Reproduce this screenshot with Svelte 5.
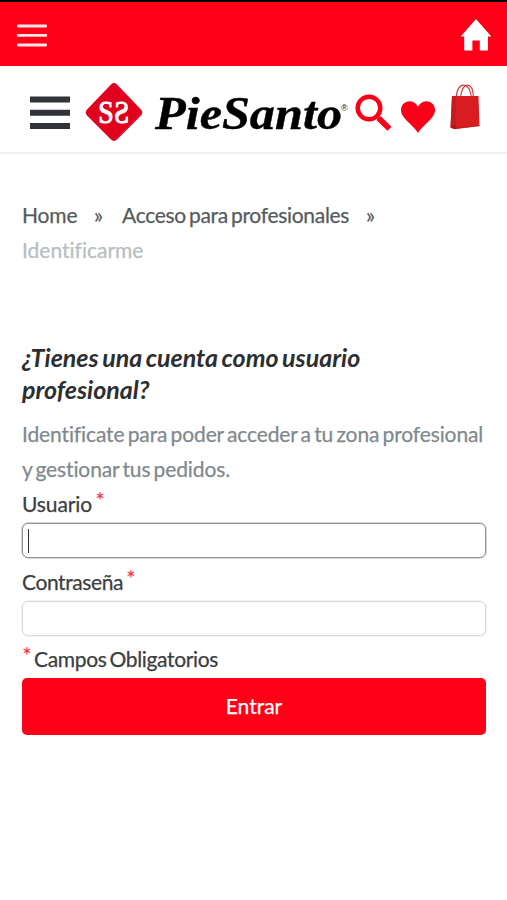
<script lang="ts">
  let usuario = $state('');
  let password = $state('');
</script>

<div class="page">
  <div class="topbar">
    <button class="icon-btn" aria-label="Menú">
      <svg width="30" height="24" viewBox="0 0 30 24">
        <path d="M1.2 3h27.600M1.200 12.400h27.600M1.200 22h27.600" stroke="#fff" stroke-opacity=".9" stroke-width="2.8" stroke-linecap="round" />
      </svg>
    </button>
    <button class="icon-btn" aria-label="Inicio">
      <svg width="32" height="33" viewBox="0 0 32 33">
        <path d="M16 0 31.300 17.500H28v13.900h-8.200V21.400h-7.400v10H4.200V17.500H.7z" fill="#fff" />
      </svg>
    </button>
  </div>

  <header class="header">
    <svg class="burger" width="40" height="33" viewBox="0 0 40 33">
      <path d="M0 3.600h40M0 16.800h40M0 30h40" stroke="#303438" stroke-width="6" />
    </svg>

    <svg class="logo" width="264" height="60" viewBox="0 0 264 60">
      <path d="M26 2.400q3-2.600 6 0L56 27.500q2.600 3 0 6L32 57.600q-3 2.600-6 0L2 33.500q-2.600-3 0-6z" fill="#e2001f" />
      <g class="monogram">
        <text x="13.2" y="40.5" textLength="15.4" lengthAdjust="spacingAndGlyphs">S</text>
        <text x="13.2" y="40.5" textLength="15.4" lengthAdjust="spacingAndGlyphs" transform="translate(57.5 0) scale(-1 1)">S</text>
      </g>
      <text class="brand" x="70" y="46.5" textLength="187" lengthAdjust="spacingAndGlyphs">PieSanto</text>
      <text class="reg" x="256" y="28.5">®</text>
    </svg>

    <svg class="search" width="37" height="38" viewBox="0 0 37 38">
      <circle cx="14" cy="15" r="11.300" fill="none" stroke="#fd0019" stroke-width="4.500" />
      <path d="m22.500 25 3-2L36.500 33.800 32.500 37.800 21.600 27.300z" fill="#fd0019" />
    </svg>
    <svg class="heart" width="36" height="34" viewBox="0 0 36 34">
      <path d="M18 33C15.500 28.500 9 23.500 5 18.800 1.800 15.200 1 12.800 1 9.800 1 4.800 4.800 1.200 9.400 1.200c3.600 0 7 2 8.600 5.600 1.600-3.600 5-5.600 8.600-5.600 4.600 0 8.400 3.600 8.400 8.600 0 3-.8 5.400-4 9C27 23.500 20.500 28.500 18 33z" fill="#fd0019" />
    </svg>
    <svg class="bag" width="30" height="46" viewBox="0 0 30 46">
      <path d="M6 14C7 5 10 1.200 13.500 1.200S20 5 21.500 13M10.500 14C11.500 5 14 1.200 17.500 1.200S23 5 23.500 13" fill="none" stroke="#d33a3a" stroke-width="1.200" />
      <path d="M2 12 28.500 12 29.500 42 5.500 45 .5 43.500z" fill="#d91c22" />
      <path d="M2 12 5.800 13 5.500 45 .5 43.500z" fill="#c51a20" />
      <path d="m1 43.500 4.500-4V45zM5.500 44.500l24-2.800" fill="#a5181d" stroke="#b5191f" stroke-width=".7" />
    </svg>
  </header>

  <main class="content">
    <nav class="breadcrumb">
      <span class="home">Home</span>
      <span class="sep">»</span>
      <span class="access">Acceso para profesionales</span>
      <span class="sep last">»</span>
      <span class="current">Identificarme</span>
    </nav>

    <h1>¿Tienes una cuenta como usuario<br />profesional?</h1>
    <p class="intro">Identificate para poder acceder a tu zona profesional<br />y gestionar tus pedidos.</p>

    <form onsubmit={(e) => e.preventDefault()}>
      <label for="usuario">Usuario <sup>*</sup></label>
      <div class="field active">
        {#if !usuario}<span class="caret"></span>{/if}
        <input id="usuario" type="text" bind:value={usuario} />
      </div>
      <label class="pass" for="password">Contraseña <sup>*</sup></label>
      <div class="field">
        <input id="password" type="password" bind:value={password} />
      </div>
      <div class="required"><sup>*</sup> Campos Obligatorios</div>
      <button class="submit" type="submit">Entrar</button>
    </form>
  </main>
</div>

<style>
  :global(body) {
    background: #fff;
  }

  .page {
    min-height: 900px;
    box-sizing: border-box;
    border-top: 2px solid #000;
    background: #fff;
    font-family: Lato, 'Open Sans', sans-serif;
    font-size: 21px;
    line-height: 35px;
    letter-spacing: -.12px;
    word-spacing: -2px;
    font-variant-ligatures: none;
    -webkit-text-stroke: .25px currentColor;
    color: #3b3e40;
  }

  .topbar {
    display: flex;
    justify-content: space-between;
    align-items: center;
    height: 64px;
    padding: 2px 15px 0 17px;
    box-sizing: border-box;
    background: #ff0016;
  }

  .icon-btn {
    display: flex;
    padding: 0;
    border: none;
    background: none;
  }

  .header {
    display: flex;
    align-items: flex-start;
    height: 88px;
    padding: 0 26px 0 30px;
    box-sizing: border-box;
    border-bottom: 2px solid #f1f1f1;
  }

  .header svg {
    flex: none;
    letter-spacing: 0;
  }

  .burger { margin-top: 30px; }
  .logo { margin: 16px 0 0 15px; }
  .search { margin: 27px 0 0 6px; }
  .heart { margin: 34px 0 0 8px; }
  .bag { margin: 18px 0 0 14px; }

  .monogram {
    font-family: 'Liberation Serif', serif;
    font-size: 32px;
    fill: #fff;
    -webkit-text-stroke: 0;
    stroke: #fff;
    stroke-width: 1.1;
  }

  .brand {
    font: italic bold 46px 'Liberation Serif', serif;
    fill: #000;
    -webkit-text-stroke: 0;
    stroke: #000;
    stroke-width: .4;
  }

  .reg {
    font: 9px 'Liberation Sans', sans-serif;
    fill: #222;
    -webkit-text-stroke: 0;
  }

  .content {
    padding: 43px 21px 0 22px;
  }

  .breadcrumb {
    display: flex;
    flex-wrap: wrap;
    color: #565a5c;
  }

  .home { width: 55px; }
  .sep { width: 10px; margin: 0 18px 0 17px; }
  .sep.last { margin-right: 60px; }
  .access { width: 227px; white-space: nowrap; letter-spacing: -.3px; }
  .current { color: #b7bec1; letter-spacing: 0; }

  h1 {
    margin: 74px 0 0;
    font-size: 25px;
    line-height: 32px;
    font-style: italic;
    font-weight: 700;
    letter-spacing: 0;
    color: #2c2f31;
    white-space: nowrap;
    -webkit-text-stroke: 0;
  }

  .intro {
    margin: 11px 0 0;
    color: #7f898e;
    white-space: nowrap;
  }

  form {
    display: flex;
    flex-direction: column;
    padding-top: 1px;
  }

  label,
  .required {
    height: 36px;
    line-height: 34px;
  }

  .pass {
    line-height: 33px;
    letter-spacing: -.4px;
  }

  .required {
    line-height: 33px;
    letter-spacing: -.35px;
  }

  sup {
    font-size: 23px;
    line-height: 0;
    vertical-align: 3px;
    letter-spacing: -.7px;
    color: #ff2a3d;
    -webkit-text-stroke: 0;
  }

  .field {
    display: flex;
    align-items: center;
    height: 35px;
    margin-bottom: 7px;
    box-sizing: border-box;
    border: 1px solid #dadada;
    border-radius: 6px;
    box-shadow: 0 0 0 .5px #e6e6e6;
  }

  .field.active {
    border-color: #8f9496;
    box-shadow: 0 0 0 .5px #a5a9ab;
  }

  .field:not(.active) { margin-bottom: 6px; }

  .caret {
    width: 1px;
    height: 24px;
    margin-left: 5px;
    background: #333;
  }

  input {
    flex: 1;
    min-width: 0;
    height: 100%;
    padding: 0 5px;
    border: none;
    outline: none;
    background: transparent;
    font: inherit;
  }

  .submit {
    height: 57px;
    padding-bottom: 3px;
    border: none;
    border-radius: 5px;
    background: #ff0016;
    color: #fff;
    font: 21px Lato, sans-serif;
    -webkit-text-stroke: .25px #fff;
  }
</style>
